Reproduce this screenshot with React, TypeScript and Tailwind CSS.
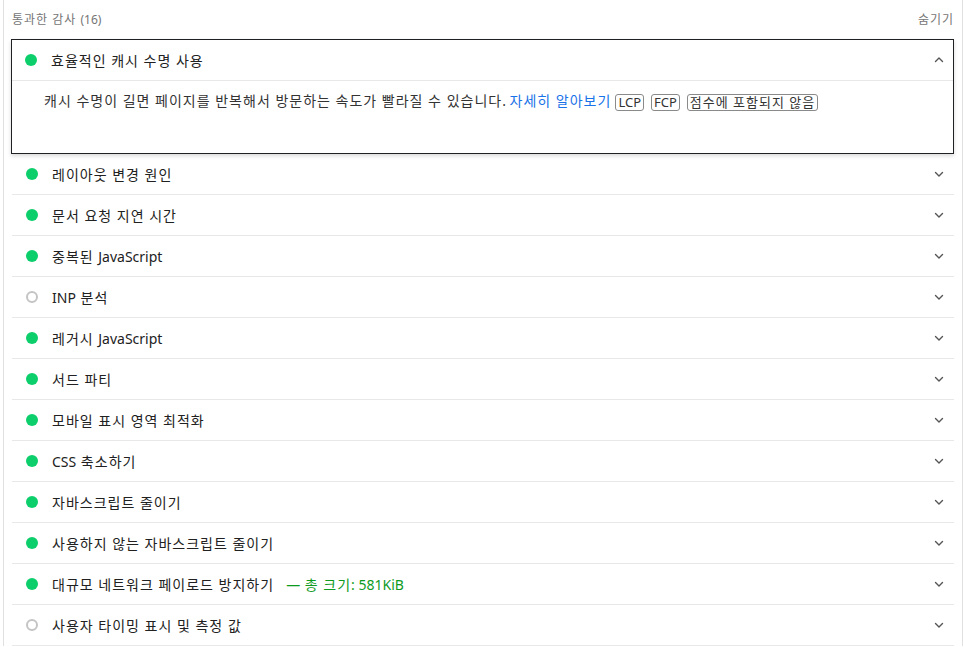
import React from "react";

type Audit = {
  title: string;
  pass: boolean;
  display?: string;
};

const audits: Audit[] = [
  { title: "레이아웃 변경 원인", pass: true },
  { title: "문서 요청 지연 시간", pass: true },
  { title: "중복된 JavaScript", pass: true },
  { title: "INP 분석", pass: false },
  { title: "레거시 JavaScript", pass: true },
  { title: "서드 파티", pass: true },
  { title: "모바일 표시 영역 최적화", pass: true },
  { title: "CSS 축소하기", pass: true },
  { title: "자바스크립트 줄이기", pass: true },
  { title: "사용하지 않는 자바스크립트 줄이기", pass: true },
  { title: "대규모 네트워크 페이로드 방지하기", pass: true, display: "— 총 크기: 581KiB" },
  { title: "사용자 타이밍 표시 및 측정 값", pass: false },
];

// hangul runs get a bit of tracking so the widths come close to the original font
const K = ({ text }: { text: string }) => {
  const parts = text.split(/([\uac00-\ud7a3 ]+)/).filter(Boolean);
  return (
    <>
      {parts.map((p, i) =>
        /[\uac00-\ud7a3]/.test(p) ? (
          <span key={i} className="tracking-[1px]">
            {p}
          </span>
        ) : (
          <span key={i}>{p}</span>
        )
      )}
    </>
  );
};

const StatusDot = ({ pass }: { pass: boolean }) =>
  pass ? (
    <span className="w-3 h-3 rounded-full bg-[#0cce6b] shrink-0" />
  ) : (
    <span className="w-3 h-3 rounded-full border-2 border-[#c4c4c4] shrink-0" />
  );

const Chevron = ({ up }: { up?: boolean }) => (
  <svg className="w-[10px] h-[10px] text-[#555]" viewBox="0 0 10 10" fill="none" aria-hidden="true">
    <path
      d={up ? "M1.5 6.5 5 3l3.5 3.5" : "M1.5 3.5 5 7l3.5-3.5"}
      stroke="currentColor"
      strokeWidth="1.4"
      strokeLinecap="round"
      strokeLinejoin="round"
    />
  </svg>
);

const Chip = ({ children, first }: { children: React.ReactNode; first?: boolean }) => (
  <span
    className={`inline-block border border-[#8a8a8a] rounded-[3px] px-[2px] text-[13px] leading-[15px] text-[#333] align-middle ${
      first ? "ml-[4px]" : "ml-[7px]"
    }`}
  >
    {children}
  </span>
);

export default function App() {
  return (
    <div
      className="min-h-screen bg-white text-[#212121]"
      style={{ fontFamily: '"Noto Sans", "Noto Sans CJK KR", sans-serif' }}
    >
      <div className="ml-[3px] w-[960px] border-x border-[#e0e0e0] px-2">
        <div className="h-[39px] flex items-center justify-between text-[12px] text-[#757575]">
          <span>
            <K text="통과한 감사 (16)" />
          </span>
          <span>
            <K text="숨기기" />
          </span>
        </div>

        <div className="-ml-px border border-[#202124] shadow-[0_2px_4px_rgba(0,0,0,0.15)] bg-white">
          <div className="h-[41px] flex items-center pl-[13px] pr-[9px] border-b border-[#e8e8e8]">
            <StatusDot pass />
            <span className="ml-[14px] text-[14px] flex-1">
              <K text="효율적인 캐시 수명 사용" />
            </span>
            <Chevron up />
          </div>
          <div className="pl-[32px] pt-[10px] pb-[42px] text-[14px] leading-5 text-[#333]">
            <K text="캐시 수명이 길면 페이지를 반복해서 방문하는 속도가 빨라질 수 있습니다. " />
            <span className="text-[#1a73e8]">
              <K text="자세히 알아보기" />
            </span>
            <Chip first>LCP</Chip>
            <Chip>FCP</Chip>
            <Chip>
              <K text="점수에 포함되지 않음" />
            </Chip>
          </div>
        </div>

        {audits.map((a) => (
          <div
            key={a.title}
            className="h-[41px] flex items-center pl-[14px] pr-[10px] border-b border-[#e8e8e8]"
          >
            <StatusDot pass={a.pass} />
            <span className="ml-[14px] text-[14px] flex-1">
              <K text={a.title} />
              {a.display && (
                <span className="ml-[12px] text-[#0d9b1f]">
                  <K text={a.display} />
                </span>
              )}
            </span>
            <Chevron />
          </div>
        ))}
      </div>
    </div>
  );
}
